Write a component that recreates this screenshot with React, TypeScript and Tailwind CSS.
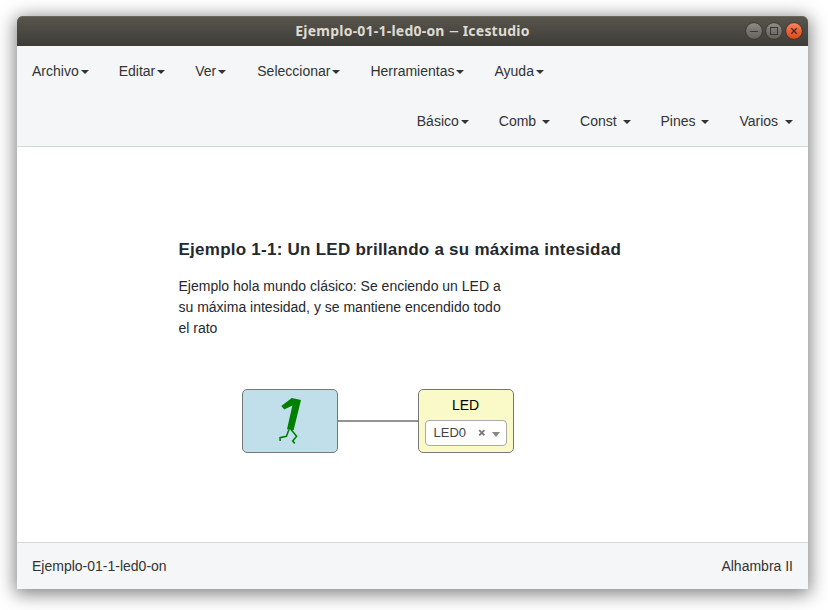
const sans = "font-['Liberation_Sans',Arial,sans-serif]";

function Caret() {
  return (
    <span className="ml-[2px] inline-block h-0 w-0 border-x-4 border-t-4 border-x-transparent border-t-[#333] align-middle" />
  );
}

function MenuItem({ label, spaced = false, className = '' }: { label: string; spaced?: boolean; className?: string }) {
  return (
    <li className={`whitespace-nowrap p-[15px] leading-5 ${className}`}>
      <span>{label}</span>
      {spaced ? ' ' : null}
      <Caret />
    </li>
  );
}

function WindowButton({ kind }: { kind: 'min' | 'max' | 'close' }) {
  const close = kind === 'close';
  return (
    <svg width="20" height="20" viewBox="0 0 20 20">
      <defs>
        <linearGradient id={`fill-${kind}`} x1="0" y1="0" x2="0" y2="1">
          <stop offset="0" stopColor={close ? '#f68a63' : '#8f8d84'} />
          <stop offset="0.5" stopColor={close ? '#ec6138' : '#77756d'} />
          <stop offset="1" stopColor={close ? '#dd4814' : '#63615a'} />
        </linearGradient>
      </defs>
      <circle cx="10" cy="10" r="8.4" fill={`url(#fill-${kind})`} stroke="#383731" strokeWidth="1" />
      {kind === 'min' && <path d="M6 10.5H14" stroke="#3a3934" />}
      {kind === 'max' && <rect x="6.5" y="6.5" width="7" height="7" fill="none" stroke="#3a3934" />}
      {close && <path d="M7.3 7.3L12.7 12.7M12.7 7.3L7.3 12.7" stroke="#4a2a18" strokeWidth="1.3" />}
    </svg>
  );
}

function RunningOne() {
  return (
    <svg width="24" height="48" viewBox="278 397 24 48">
      <path d="M281.3 406L291.8 398L301 400L293.6 430.2L287 429.3L292.4 405.6L284.3 409.6Z" fill="#008000" />
      <path
        d="M289 429.5L286.4 436.3L280 437.7L280.2 441M291 429.5L296.6 436.2L292.7 441L294.8 443.4"
        fill="none"
        stroke="#008000"
        strokeWidth="1.6"
      />
    </svg>
  );
}

export default function App() {
  return (
    <div className={`h-[610px] w-[828px] bg-white pl-[17px] pt-4 text-sm text-[#333] ${sans}`}>
      <div className="flex h-[573px] w-[791px] flex-col rounded-t-[6px] shadow-[0_3px_18px_2px_rgba(0,0,0,0.5)]">
        <header className="relative flex h-[30px] shrink-0 items-center justify-center rounded-t-[6px] bg-linear-to-b from-[#59564d] to-[#3d3c37] shadow-[inset_0_1px_0_#69665c]">
          <h1 className="flex gap-[4px] whitespace-nowrap font-['Noto_Sans',sans-serif] text-[14px] font-bold tracking-[0.22px] text-[#dfdbd2]">
            <span>Ejemplo-01-1-led0-on</span>
            <span className="w-[10px] origin-left scale-x-[1.4] font-normal">–</span>
            <span>Icestudio</span>
          </h1>
          <div className="absolute right-[4px] top-[5px] flex">
            <WindowButton kind="min" />
            <WindowButton kind="max" />
            <WindowButton kind="close" />
          </div>
        </header>

        <nav className="h-[101px] shrink-0 border-b border-[#d0d9da] bg-[#f4f6f8]">
          <ul className="flex">
            <MenuItem label="Archivo" />
            <MenuItem label="Editar" />
            <MenuItem label="Ver" className="pr-4" />
            <MenuItem label="Seleccionar" />
            <MenuItem label="Herramientas" />
            <MenuItem label="Ayuda" />
          </ul>
          <ul className="flex justify-end">
            <MenuItem label="Básico" />
            <MenuItem label="Comb" spaced />
            <MenuItem label="Const" spaced />
            <MenuItem label="Pines" spaced />
            <MenuItem label="Varios" spaced className="[&>span:first-child]:mr-px" />
          </ul>
        </nav>

        <main className="relative grow bg-white text-[#24292e]">
          <section className="absolute left-[161.5px] top-[92px] w-[460px]">
            <h2 className="whitespace-nowrap text-[17px] font-bold leading-[22px] tracking-[0.25px]">
              Ejemplo 1-1: Un LED brillando a su máxima intesidad
            </h2>
            <p className="mt-[15px] w-[330px] leading-[21px]">
              Ejemplo hola mundo clásico: Se enciendo un LED a
              <br />
              su máxima intesidad, y se mantiene encendido todo
              <br />
              el rato
            </p>
          </section>

          <div className="absolute left-[320px] top-[273px] h-[2px] w-[82px] bg-[#929292]" />
          <div className="absolute left-[225px] top-[242px] flex h-16 w-24 items-start justify-center rounded-[5px] border border-[#777] bg-[#c0dfeb] pt-[7px]">
            <RunningOne />
          </div>
          <div className="absolute left-[401px] top-[242px] h-16 w-24 rounded-[5px] border border-[#777] bg-[#fafac8] px-[6px] pt-[5px]">
            <div className="pr-px text-center leading-5 text-black">LED</div>
            <div className="mt-[5px] flex h-[26px] items-center rounded-[4px] border border-[#aaa] bg-white pl-[7.5px] pr-[6px] text-[13px] text-[#444]">
              <span className="grow">LED0</span>
              <svg className="mr-[6px]" width="8" height="8" viewBox="0 0 8 8">
                <path d="M1.2 1.2L6.4 6.4M6.4 1.2L1.2 6.4" stroke="#777" strokeWidth="1.8" />
              </svg>
              <span className="mt-[2px] border-x-4 border-t-5 border-x-transparent border-t-[#888]" />
            </div>
          </div>
        </main>

        <footer className="flex h-[47px] shrink-0 items-center justify-between border-t border-[#d3d6da] bg-[#f4f6f8] px-[15px]">
          <span>Ejemplo-01-1-led0-on</span>
          <span>Alhambra II</span>
        </footer>
      </div>
    </div>
  );
}
